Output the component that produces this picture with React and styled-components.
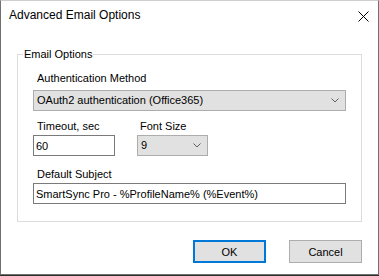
import React from "react";
import styled, { createGlobalStyle } from "styled-components";

const Global = createGlobalStyle`
  html, body { margin: 0; padding: 0; background: #2d2d30; }
  body { font-family: "Liberation Sans", Arial, sans-serif; }
  * { box-sizing: border-box; }
`;

const Window = styled.div`
  width: 379px;
  height: 275px;
  background: #fff;
  border: 1px solid #707070;
  border-top-color: #cfcfcf;
  display: flex;
  flex-direction: column;
  color: #000;
`;

const TitleBar = styled.div`
  height: 30px;
  display: flex;
  align-items: flex-start;
  justify-content: space-between;
  padding: 7px 9px 0 8px;
`;

const Title = styled.div`
  font-size: 12px;
  line-height: 15px;
`;

const CloseIcon = styled.svg`
  margin-top: 3px;
  display: block;
`;

const Body = styled.div`
  flex: 1;
  display: flex;
  flex-direction: column;
  padding: 16px 16px 11px 16px;
`;

const Group = styled.fieldset`
  margin: 0;
  min-width: 0;
  border: 1px solid #dcdcdc;
  padding: 9px 15px 17px 15px;
  display: flex;
  flex-direction: column;
`;

const Legend = styled.legend`
  font-size: 11px;
  line-height: 15px;
  padding: 0 1px;
  margin-left: -10px;
`;

const Label = styled.div`
  font-size: 11px;
  line-height: 15px;
  padding-left: ${(p) => p.$indent ?? 4}px;
  margin-top: ${(p) => p.$mt || 0}px;
  margin-bottom: ${(p) => p.$mb ?? 1}px;
  white-space: nowrap;
`;

const Combo = styled.div`
  height: 21px;
  width: ${(p) => (p.$w ? `${p.$w}px` : "auto")};
  border: 1px solid #adadad;
  background: #e1e1e1;
  display: flex;
  align-items: center;
  justify-content: space-between;
  padding: 0 6px 0 3px;
  font-size: 11px;
  line-height: 15px;
  white-space: nowrap;
`;

const Field = styled.input`
  height: 21px;
  width: ${(p) => (p.$w ? `${p.$w}px` : "100%")};
  border: 1px solid #7a7a7a;
  background: #fff;
  padding: 0 2px;
  margin: 0;
  font-family: "Liberation Sans", Arial, sans-serif;
  font-size: 11px;
  line-height: 15px;
  color: #000;
  outline: none;
  display: block;
`;

const Row = styled.div`
  display: flex;
  gap: 22px;
  align-items: flex-start;
`;

const Col = styled.div`
  display: flex;
  flex-direction: column;
`;

const Buttons = styled.div`
  margin-top: 18px;
  display: flex;
  justify-content: flex-end;
  gap: 23px;
`;

const Button = styled.button`
  width: 73px;
  height: 23px;
  margin: 0;
  padding: 0;
  background: #e1e1e1;
  border: ${(p) => (p.$primary ? "2px solid #0078d7" : "1px solid #adadad")};
  font-family: "Liberation Sans", Arial, sans-serif;
  font-size: 11px;
  color: #000;
`;

const Chevron = () => (
  <svg width="8" height="5" viewBox="0 0 8 5">
    <polyline points="0.5,0.5 4,4 7.5,0.5" fill="none" stroke="#606060" strokeWidth="1" />
  </svg>
);

export default function App() {
  return (
    <>
      <Global />
      <Window>
        <TitleBar>
          <Title>Advanced Email Options</Title>
          <CloseIcon width="11" height="11" viewBox="0 0 11 11">
            <line x1="0.5" y1="0.5" x2="10.5" y2="10.5" stroke="#000" strokeWidth="1" />
            <line x1="10.5" y1="0.5" x2="0.5" y2="10.5" stroke="#000" strokeWidth="1" />
          </CloseIcon>
        </TitleBar>
        <Body>
          <Group>
            <Legend>Email Options</Legend>
            <Label $mb={4}>Authentication Method</Label>
            <Combo>
              <span>OAuth2 authentication (Office365)</span>
              <Chevron />
            </Combo>
            <Row>
              <Col>
                <Label $mt={8}>Timeout, sec</Label>
                <Field $w={82} readOnly value="60" />
              </Col>
              <Col>
                <Label $mt={8} $indent={3}>Font Size</Label>
                <Combo $w={71}>
                  <span>9</span>
                  <Chevron />
                </Combo>
              </Col>
            </Row>
            <Label $mt={11}>Default Subject</Label>
            <Field readOnly value="SmartSync Pro - %ProfileName% (%Event%)" />
          </Group>
          <Buttons>
            <Button $primary>OK</Button>
            <Button>Cancel</Button>
          </Buttons>
        </Body>
      </Window>
    </>
  );
}
